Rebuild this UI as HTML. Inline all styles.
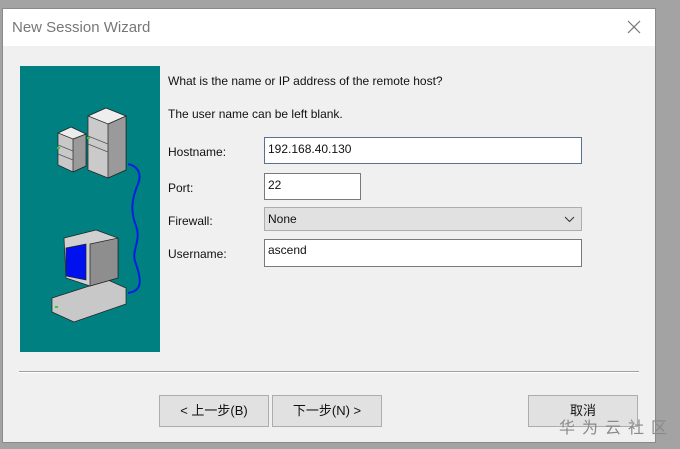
<!DOCTYPE html>
<html><head><meta charset="utf-8"><style>
*{margin:0;padding:0;box-sizing:border-box}
body{width:680px;height:449px;background:#a3a3a3;position:relative;overflow:hidden;font-family:"Liberation Sans","Noto Sans CJK SC",sans-serif;font-size:12px;color:#111}
.win{position:absolute;left:2px;top:8px;width:654px;height:435px;background:#f0f0f0;border:1px solid #8a8a8a}
.title{position:absolute;left:0;top:0;width:100%;height:37px;background:#fff}
.title span{position:absolute;left:9px;top:10px;font-size:15px;color:#777}
.x{position:absolute;left:624px;top:11px}
.panel{position:absolute;left:17px;top:57px;width:140px;height:286px;background:#008080}
.t{position:absolute;font-size:12px}
.inp{position:absolute;background:#fff;border:1px solid #7a7a7a;padding:4px 3px;font-size:12px}
.hn{border-color:#5a7090}
.btn{position:absolute;top:386px;height:32px;width:110px;background:#e1e1e1;border:1px solid #adadad;text-align:center;line-height:30px;font-size:13px}
.sep{position:absolute;left:16px;top:362px;width:620px;border-top:1px solid #a0a0a0;border-bottom:1px solid #fff}
.wm{position:absolute;left:559px;top:414px;font-size:16px;color:#8a8a8a;letter-spacing:7px;font-family:"Noto Sans CJK SC",sans-serif}
</style></head><body>
<div class="win">
<div class="title"><span>New Session Wizard</span>
<svg class="x" width="14" height="14"><path d="M1 1L13 13M13 1L1 13" stroke="#777" stroke-width="1.2"/></svg></div>
<div class="panel">
<svg width="140" height="286">
<path d="M108 98C118 100 122 108 118 118C112 132 110 145 116 160C122 175 110 185 116 198C122 215 122 225 108 227" stroke="#0020e0" stroke-width="2" fill="none"/>
<g stroke="#222" stroke-width="0.7">
<polygon points="38,67 51,61 66,68 66,100 53,106 38,99" fill="#c8c8c8"/>
<polygon points="53,73 66,68 66,100 53,106" fill="#9a9a9a"/>
<polygon points="38,67 51,61 66,68 53,73" fill="#ececec"/>
<polygon points="68,50 86,42 106,50 106,104 88,112 68,104" fill="#cacaca"/>
<polygon points="88,58 106,50 106,104 88,112" fill="#9a9a9a"/>
<polygon points="68,50 86,42 106,50 88,58" fill="#eeeeee"/>
<path d="M38 79L53 85M38 88L53 94M68 70L88 78M68 78L88 86" stroke="#555" fill="none"/>
<polygon points="32,232 88,214 106,222 106,238 54,256 32,246" fill="#c8c8c8"/>
<polygon points="44,172 76,164 98,172 98,212 70,220 46,212" fill="#d0d0d0"/>
<polygon points="70,178 98,172 98,212 70,220" fill="#8e8e8e"/>
<polygon points="46,182 66,178 66,214 46,210" fill="#0010ee"/>
</g>
<rect x="67" y="71" width="3" height="2" fill="#3c3"/><rect x="37" y="81" width="3" height="2" fill="#3c3"/>
<rect x="35" y="240" width="3" height="2" fill="#3c3"/>
</svg></div>
<div class="t" style="left:165px;top:65px">What is the name or IP address of the remote host?</div>
<div class="t" style="left:165px;top:98px">The user name can be left blank.</div>
<div class="t" style="left:165px;top:136px">Hostname:</div>
<div class="t" style="left:165px;top:172px">Port:</div>
<div class="t" style="left:165px;top:205px">Firewall:</div>
<div class="t" style="left:165px;top:238px">Username:</div>
<div class="inp hn" style="left:261px;top:128px;width:318px;height:27px">192.168.40.130</div>
<div class="inp" style="left:261px;top:164px;width:97px;height:27px">22</div>
<div class="inp" style="left:261px;top:198px;width:318px;height:24px;background:#e1e1e1;border-color:#adadad;padding-top:4px">None
<svg style="position:absolute;right:6px;top:8px" width="11" height="7"><path d="M1 1L5.5 5.5L10 1" stroke="#333" fill="none"/></svg></div>
<div class="inp" style="left:261px;top:230px;width:318px;height:28px;padding-top:3px">ascend</div>
<div class="sep"></div>
<div class="btn" style="left:156px">&lt; 上一步(B)</div>
<div class="btn" style="left:269px">下一步(N) &gt;</div>
<div class="btn" style="left:525px">取消</div>
</div>
<div class="wm">华为云社区</div>
</body></html>
